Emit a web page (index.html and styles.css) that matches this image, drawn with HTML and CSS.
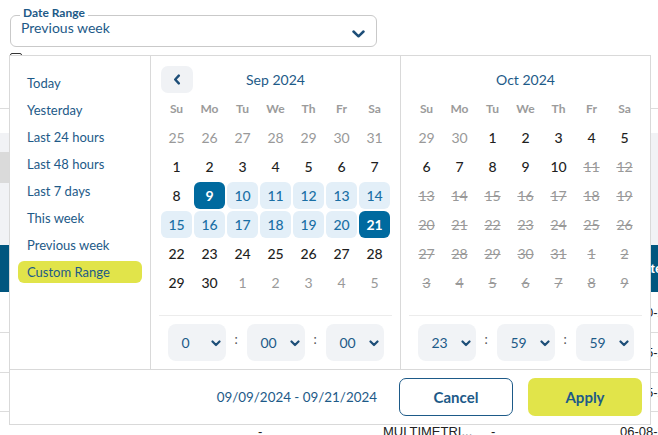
FILE: index.html
```html
<!DOCTYPE html>
<html>
<head>
<meta charset="utf-8">
<link rel="stylesheet" href="styles.css">
</head>
<body>
<div class="field">
  <span class="field-label">Date Range</span>
  <span class="field-value">Previous week</span>
  <svg class="field-chev" width="13" height="8" viewBox="0 0 13 8"><path d="M1.5 1.5 L6.5 6.3 L11.5 1.5" fill="none" stroke="#1d4e78" stroke-width="2.5" stroke-linecap="round" stroke-linejoin="round"/></svg>
</div>
<div class="check-row"><span class="checkbox"></span><span class="check-text">Active Date</span></div>

<div class="table">
  <div class="t-filter"></div>
  <div class="t-gray"><div class="t-gray-sel"></div></div>
  <div class="t-head"><span class="t-head-text">Date</span></div>
  <div class="t-row r1"><span></span><span></span><span></span><span></span><span class="t-date">06-10-2024</span></div>
  <div class="t-row r2"><span></span><span></span><span></span><span></span><span class="t-date">06-05-2024</span></div>
  <div class="t-row r3"><span></span><span></span><span></span><span></span><span class="t-date">06-05-2024</span></div>
  <div class="t-row r4"><span></span><span class="t-c2">-</span><span>MULTIMETRI...</span><span class="t-c4">-</span><span class="t-date">06-08-2024</span></div>
</div>

<div class="picker">
  <div class="picker-body">
    <ul class="ranges">
      <li>Today</li>
      <li>Yesterday</li>
      <li>Last 24 hours</li>
      <li>Last 48 hours</li>
      <li>Last 7 days</li>
      <li>This week</li>
      <li>Previous week</li>
      <li class="active">Custom Range</li>
    </ul>

    <div class="cal">
      <div class="cal-head">
        <span class="nav-btn"><svg width="8" height="11" viewBox="0 0 8 11"><path d="M5.8 1.6 L2.2 5.5 L5.8 9.4" fill="none" stroke="#1d4e78" stroke-width="2.4" stroke-linecap="round" stroke-linejoin="round"/></svg></span>
        <span class="cal-title">Sep 2024</span>
        <span></span>
      </div>
      <div class="grid">
        <span class="wd">Su</span><span class="wd">Mo</span><span class="wd">Tu</span><span class="wd">We</span><span class="wd">Th</span><span class="wd">Fr</span><span class="wd">Sa</span>
        <span class="d off">25</span><span class="d off">26</span><span class="d off">27</span><span class="d off">28</span><span class="d off">29</span><span class="d off">30</span><span class="d off">31</span>
        <span class="d">1</span><span class="d">2</span><span class="d">3</span><span class="d">4</span><span class="d">5</span><span class="d">6</span><span class="d">7</span>
        <span class="d">8</span><span class="d sel">9</span><span class="d rng">10</span><span class="d rng">11</span><span class="d rng">12</span><span class="d rng">13</span><span class="d rng">14</span>
        <span class="d rng">15</span><span class="d rng">16</span><span class="d rng">17</span><span class="d rng">18</span><span class="d rng">19</span><span class="d rng">20</span><span class="d sel">21</span>
        <span class="d">22</span><span class="d">23</span><span class="d">24</span><span class="d">25</span><span class="d">26</span><span class="d">27</span><span class="d">28</span>
        <span class="d">29</span><span class="d">30</span><span class="d off">1</span><span class="d off">2</span><span class="d off">3</span><span class="d off">4</span><span class="d off">5</span>
      </div>
      <div class="time-sep"></div>
      <div class="time">
        <span class="tsel"><span>0</span><svg width="10" height="7" viewBox="0 0 10 7"><path d="M1.5 1.5 L5 5 L8.5 1.5" fill="none" stroke="#1d4e78" stroke-width="2.2" stroke-linecap="round" stroke-linejoin="round"/></svg></span>
        <span class="colon">:</span>
        <span class="tsel"><span>00</span><svg width="10" height="7" viewBox="0 0 10 7"><path d="M1.5 1.5 L5 5 L8.5 1.5" fill="none" stroke="#1d4e78" stroke-width="2.2" stroke-linecap="round" stroke-linejoin="round"/></svg></span>
        <span class="colon">:</span>
        <span class="tsel"><span>00</span><svg width="10" height="7" viewBox="0 0 10 7"><path d="M1.5 1.5 L5 5 L8.5 1.5" fill="none" stroke="#1d4e78" stroke-width="2.2" stroke-linecap="round" stroke-linejoin="round"/></svg></span>
      </div>
    </div>

    <div class="cal last">
      <div class="cal-head">
        <span></span>
        <span class="cal-title">Oct 2024</span>
        <span></span>
      </div>
      <div class="grid">
        <span class="wd">Su</span><span class="wd">Mo</span><span class="wd">Tu</span><span class="wd">We</span><span class="wd">Th</span><span class="wd">Fr</span><span class="wd">Sa</span>
        <span class="d off">29</span><span class="d off">30</span><span class="d">1</span><span class="d">2</span><span class="d">3</span><span class="d">4</span><span class="d">5</span>
        <span class="d">6</span><span class="d">7</span><span class="d">8</span><span class="d">9</span><span class="d">10</span><span class="d dis">11</span><span class="d dis">12</span>
        <span class="d dis">13</span><span class="d dis">14</span><span class="d dis">15</span><span class="d dis">16</span><span class="d dis">17</span><span class="d dis">18</span><span class="d dis">19</span>
        <span class="d dis">20</span><span class="d dis">21</span><span class="d dis">22</span><span class="d dis">23</span><span class="d dis">24</span><span class="d dis">25</span><span class="d dis">26</span>
        <span class="d dis">27</span><span class="d dis">28</span><span class="d dis">29</span><span class="d dis">30</span><span class="d dis">31</span><span class="d dis">1</span><span class="d dis">2</span>
        <span class="d dis">3</span><span class="d dis">4</span><span class="d dis">5</span><span class="d dis">6</span><span class="d dis">7</span><span class="d dis">8</span><span class="d dis">9</span>
      </div>
      <div class="time-sep"></div>
      <div class="time">
        <span class="tsel"><span>23</span><svg width="10" height="7" viewBox="0 0 10 7"><path d="M1.5 1.5 L5 5 L8.5 1.5" fill="none" stroke="#1d4e78" stroke-width="2.2" stroke-linecap="round" stroke-linejoin="round"/></svg></span>
        <span class="colon">:</span>
        <span class="tsel"><span>59</span><svg width="10" height="7" viewBox="0 0 10 7"><path d="M1.5 1.5 L5 5 L8.5 1.5" fill="none" stroke="#1d4e78" stroke-width="2.2" stroke-linecap="round" stroke-linejoin="round"/></svg></span>
        <span class="colon">:</span>
        <span class="tsel"><span>59</span><svg width="10" height="7" viewBox="0 0 10 7"><path d="M1.5 1.5 L5 5 L8.5 1.5" fill="none" stroke="#1d4e78" stroke-width="2.2" stroke-linecap="round" stroke-linejoin="round"/></svg></span>
      </div>
    </div>
  </div>
  <div class="picker-foot">
    <span class="range-text">09/09/2024 - 09/21/2024</span>
    <button class="btn btn-cancel">Cancel</button>
    <button class="btn btn-apply">Apply</button>
  </div>
</div>
</body>
</html>
```
FILE: styles.css
```css
* { box-sizing: border-box; }
html, body { margin: 0; padding: 0; background: #fff; }
body {
  font-family: Lato, "Noto Sans", sans-serif;
  width: 658px;
  height: 435px;
  overflow: hidden;
  color: #222;
}

/* background form */
.field {
  position: relative;
  margin: 15px 0 0 10px;
  width: 367px;
  height: 32px;
  border: 1px solid #c9c9c9;
  border-radius: 6px;
  display: flex;
  align-items: flex-start;
  padding: 4px 11px 0 10px;
}
.field-label {
  position: absolute;
  left: 9px;
  top: -9px;
  padding: 0 3px;
  background: #fff;
  font-size: 12px;
  font-weight: 700;
  line-height: 12px;
  color: #1d5a88;
}
.field-value {
  flex: 1;
  font-size: 14px;
  line-height: 16px;
  color: #1d5a88;
}
.field-chev { align-self: center; margin-top: 2px; }

.check-row {
  margin: 6px 0 0 10px;
  height: 14px;
  display: flex;
  align-items: flex-start;
  gap: 10px;
}
.checkbox {
  width: 12px;
  height: 12px;
  border: 1.5px solid #333;
  border-radius: 2px;
}
.check-text { font-size: 12px; font-weight: 700; color: #333; line-height: 14px; }

.table {
  margin-top: 41px;
  border-top: 1px solid #dcdcdc;
  font-family: "Liberation Sans", Arial, sans-serif;
  font-size: 13px;
}
.t-filter { height: 24px; }
.t-gray { height: 112px; background: #f1f2f5; padding-top: 19px; }
.t-gray-sel { width: 9px; height: 31px; background: #dadada; }
.t-head {
  height: 47px;
  background: #01567f;
  color: #fff;
  font-weight: 700;
  display: flex;
  align-items: center;
  padding-left: 634px;
  white-space: nowrap;
}
.t-row {
  display: grid;
  grid-template-columns: 250px 133px 104px 133px 1fr;
  align-items: center;
  border-bottom: 1px solid #dcdcdc;
  white-space: nowrap;
  color: #222;
}
.r1 { height: 41px; }
.r2 { height: 40px; }
.r3 { height: 39px; }
.r4 { height: 39px; }
.t-c2 { padding-left: 8px; }
.t-c4 { padding-left: 4px; }

/* picker popup */
.picker {
  position: absolute;
  left: 9px;
  top: 55px;
  width: 642px;
  border: 1px solid #d9d9d9;
  background: #fff;
}
.picker-body {
  display: flex;
  height: 314px;
  border-bottom: 1px solid #d9d9d9;
}
.ranges {
  list-style: none;
  margin: 0;
  width: 141px;
  padding: 16px 8px 0 8px;
  border-right: 1px solid #d9d9d9;
}
.ranges li {
  height: 22px;
  line-height: 22px;
  padding-left: 9px;
  margin-bottom: 5px;
  font-size: 13px;
  color: #1d5a88;
  border-radius: 6px;
}
.ranges li.active { background: #e1e44a; }

.cal {
  width: 250px;
  padding: 10px 0 0 0;
  border-right: 1px solid #d9d9d9;
}
.cal.last { width: 249px; border-right: none; }
.cal-head {
  display: grid;
  grid-template-columns: 32px 1fr 32px;
  height: 27px;
  margin: 0 10px 2px 10px;
  align-items: center;
}
.nav-btn {
  width: 32px;
  height: 27px;
  background: #f0f2f5;
  border-radius: 7px;
  display: flex;
  align-items: center;
  justify-content: center;
}
.cal-title {
  text-align: center;
  font-size: 14px;
  color: #1d5a88;
}
.grid {
  display: grid;
  grid-template-columns: repeat(7, 31px);
  grid-auto-rows: 27px;
  column-gap: 2px;
  row-gap: 2px;
  margin-left: 10px;
}
.wd, .d {
  display: flex;
  align-items: center;
  justify-content: center;
  border-radius: 6px;
}
.wd { font-size: 12px; font-weight: 700; color: #9b9b9b; }
.d { font-size: 14px; font-weight: 500; color: #1f1f1f; }
.d.off { color: #999; font-weight: 400; }
.d.dis { color: #999; font-weight: 400; text-decoration: line-through; }
.d.rng { background: #e3eff8; color: #1a6fa5; }
.d.sel { background: #006a9f; color: #fff; font-weight: 700; }

.time-sep {
  margin: 19px 8px 0 8px;
  border-top: 1px solid #ececec;
}
.time {
  display: flex;
  justify-content: center;
  margin-top: 8px;
}
.tsel {
  width: 58px;
  height: 37px;
  background: #f1f3f6;
  border-radius: 8px;
  display: flex;
  align-items: center;
  justify-content: space-between;
  padding: 0 5px 0 14px;
  font-size: 14px;
  color: #1d5a88;
}
.tsel svg { margin-top: 1px; }
.colon {
  width: 21px;
  text-align: center;
  font-size: 13px;
  color: #555;
  line-height: 30px;
}

.picker-foot {
  height: 54px;
  display: flex;
  align-items: center;
  justify-content: flex-end;
  padding-right: 8px;
}
.range-text {
  font-size: 13.4px;
  color: #1d5a88;
  margin-right: 22px;
}
.btn {
  width: 114px;
  height: 38px;
  border-radius: 7px;
  font-family: Lato, "Noto Sans", sans-serif;
  font-size: 15px;
  font-weight: 700;
  color: #1d5a88;
  cursor: pointer;
}
.btn-cancel {
  background: #fff;
  border: 1.5px solid #1d5a88;
  margin-right: 15px;
}
.btn-apply {
  background: #e1e44a;
  border: none;
}
```
